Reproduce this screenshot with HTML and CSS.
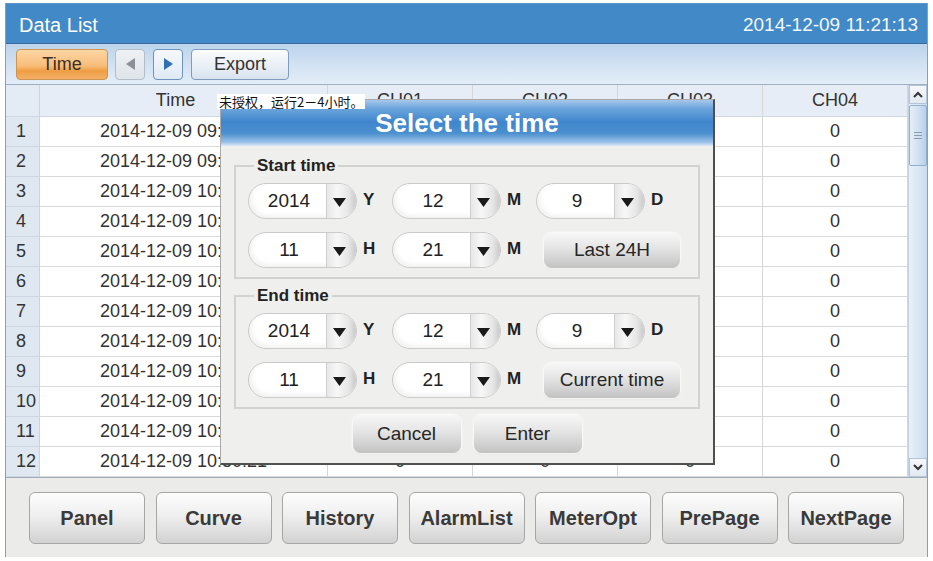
FILE: index.html
```html
<!DOCTYPE html>
<html lang="en">
<head>
<meta charset="utf-8">
<title>Data List</title>
<link rel="stylesheet" href="styles.css">
</head>
<body>
<div class="app">
  <header class="titlebar">
    <span class="title">Data List</span>
    <span class="clock">2014-12-09 11:21:13</span>
  </header>

  <div class="toolbar">
    <button class="tb-btn tb-time">Time</button>
    <button class="tb-btn tb-arrow tb-prev"><svg width="9" height="12" viewBox="0 0 9 12"><path d="M9 0V12L0 6Z"/></svg></button>
    <button class="tb-btn tb-arrow tb-next"><svg width="9" height="12" viewBox="0 0 9 12"><path d="M0 0V12L9 6Z"/></svg></button>
    <button class="tb-btn tb-export">Export</button>
  </div>

  <div class="grid-area">
    <div class="grid">
      <div class="row head">
        <div class="cell idx"></div><div class="cell time-head">Time</div><div class="cell">CH01</div><div class="cell">CH02</div><div class="cell">CH03</div><div class="cell">CH04</div>
      </div>
      <div class="row"><div class="cell idx">1</div><div class="cell">2014-12-09 09:55:21</div><div class="cell">0</div><div class="cell">0</div><div class="cell">0</div><div class="cell">0</div></div>
      <div class="row"><div class="cell idx">2</div><div class="cell">2014-12-09 09:59:21</div><div class="cell">0</div><div class="cell">0</div><div class="cell">0</div><div class="cell">0</div></div>
      <div class="row"><div class="cell idx">3</div><div class="cell">2014-12-09 10:05:21</div><div class="cell">0</div><div class="cell">0</div><div class="cell">0</div><div class="cell">0</div></div>
      <div class="row"><div class="cell idx">4</div><div class="cell">2014-12-09 10:10:21</div><div class="cell">0</div><div class="cell">0</div><div class="cell">0</div><div class="cell">0</div></div>
      <div class="row"><div class="cell idx">5</div><div class="cell">2014-12-09 10:15:21</div><div class="cell">0</div><div class="cell">0</div><div class="cell">0</div><div class="cell">0</div></div>
      <div class="row"><div class="cell idx">6</div><div class="cell">2014-12-09 10:20:21</div><div class="cell">0</div><div class="cell">0</div><div class="cell">0</div><div class="cell">0</div></div>
      <div class="row"><div class="cell idx">7</div><div class="cell">2014-12-09 10:25:21</div><div class="cell">0</div><div class="cell">0</div><div class="cell">0</div><div class="cell">0</div></div>
      <div class="row"><div class="cell idx">8</div><div class="cell">2014-12-09 10:30:21</div><div class="cell">0</div><div class="cell">0</div><div class="cell">0</div><div class="cell">0</div></div>
      <div class="row"><div class="cell idx">9</div><div class="cell">2014-12-09 10:35:21</div><div class="cell">0</div><div class="cell">0</div><div class="cell">0</div><div class="cell">0</div></div>
      <div class="row"><div class="cell idx">10</div><div class="cell">2014-12-09 10:40:21</div><div class="cell">0</div><div class="cell">0</div><div class="cell">0</div><div class="cell">0</div></div>
      <div class="row"><div class="cell idx">11</div><div class="cell">2014-12-09 10:45:21</div><div class="cell">0</div><div class="cell">0</div><div class="cell">0</div><div class="cell">0</div></div>
      <div class="row"><div class="cell idx">12</div><div class="cell">2014-12-09 10:50:21</div><div class="cell">0</div><div class="cell">0</div><div class="cell">0</div><div class="cell">0</div></div>
    </div>
    <div class="scrollbar">
      <div class="sb-btn"><svg width="10" height="7" viewBox="0 0 10 7"><path d="M1 6L5 2L9 6" fill="none" stroke="#333" stroke-width="2"/></svg></div>
      <div class="sb-track">
        <div class="sb-thumb"><svg width="8" height="7" viewBox="0 0 8 7"><path d="M0 .5H8M0 3.5H8M0 6.5H8" stroke="#8a9cb0" stroke-width="1"/></svg></div>
      </div>
      <div class="sb-btn sb-down"><svg width="10" height="7" viewBox="0 0 10 7"><path d="M1 1L5 5L9 1" fill="none" stroke="#333" stroke-width="2"/></svg></div>
    </div>
  </div>

  <nav class="bottombar">
    <button class="nav-btn">Panel</button>
    <button class="nav-btn">Curve</button>
    <button class="nav-btn">History</button>
    <button class="nav-btn">AlarmList</button>
    <button class="nav-btn">MeterOpt</button>
    <button class="nav-btn">PrePage</button>
    <button class="nav-btn">NextPage</button>
  </nav>

  <div class="dialog">
    <div class="dlg-head">Select the time</div>
    <div class="dlg-body">
      <fieldset class="group">
        <legend>Start time</legend>
        <div class="line">
          <div class="field"><div class="combo"><span class="combo-val">2014</span><span class="combo-arrow"><svg width="13" height="9" viewBox="0 0 13 9"><path d="M0 0H13L6.5 9Z"/></svg></span></div><span class="unit">Y</span></div>
          <div class="field"><div class="combo"><span class="combo-val">12</span><span class="combo-arrow"><svg width="13" height="9" viewBox="0 0 13 9"><path d="M0 0H13L6.5 9Z"/></svg></span></div><span class="unit">M</span></div>
          <div class="field"><div class="combo"><span class="combo-val">9</span><span class="combo-arrow"><svg width="13" height="9" viewBox="0 0 13 9"><path d="M0 0H13L6.5 9Z"/></svg></span></div><span class="unit">D</span></div>
        </div>
        <div class="line">
          <div class="field"><div class="combo"><span class="combo-val">11</span><span class="combo-arrow"><svg width="13" height="9" viewBox="0 0 13 9"><path d="M0 0H13L6.5 9Z"/></svg></span></div><span class="unit">H</span></div>
          <div class="field"><div class="combo"><span class="combo-val">21</span><span class="combo-arrow"><svg width="13" height="9" viewBox="0 0 13 9"><path d="M0 0H13L6.5 9Z"/></svg></span></div><span class="unit">M</span></div>
          <button class="soft-btn wide">Last 24H</button>
        </div>
      </fieldset>
      <fieldset class="group group-end">
        <legend>End time</legend>
        <div class="line">
          <div class="field"><div class="combo"><span class="combo-val">2014</span><span class="combo-arrow"><svg width="13" height="9" viewBox="0 0 13 9"><path d="M0 0H13L6.5 9Z"/></svg></span></div><span class="unit">Y</span></div>
          <div class="field"><div class="combo"><span class="combo-val">12</span><span class="combo-arrow"><svg width="13" height="9" viewBox="0 0 13 9"><path d="M0 0H13L6.5 9Z"/></svg></span></div><span class="unit">M</span></div>
          <div class="field"><div class="combo"><span class="combo-val">9</span><span class="combo-arrow"><svg width="13" height="9" viewBox="0 0 13 9"><path d="M0 0H13L6.5 9Z"/></svg></span></div><span class="unit">D</span></div>
        </div>
        <div class="line">
          <div class="field"><div class="combo"><span class="combo-val">11</span><span class="combo-arrow"><svg width="13" height="9" viewBox="0 0 13 9"><path d="M0 0H13L6.5 9Z"/></svg></span></div><span class="unit">H</span></div>
          <div class="field"><div class="combo"><span class="combo-val">21</span><span class="combo-arrow"><svg width="13" height="9" viewBox="0 0 13 9"><path d="M0 0H13L6.5 9Z"/></svg></span></div><span class="unit">M</span></div>
          <button class="soft-btn wide">Current time</button>
        </div>
      </fieldset>
      <div class="actions">
        <button class="soft-btn act">Cancel</button>
        <button class="soft-btn act">Enter</button>
      </div>
    </div>
  </div>

  <div class="watermark">未授权，运行2－4小时。</div>
</div>
</body>
</html>
```

FILE: styles.css
```css
* { box-sizing: border-box; }

html, body {
  margin: 0;
  padding: 0;
  background: #ffffff;
}

body {
  width: 933px;
  height: 561px;
  overflow: hidden;
  font-family: "Liberation Sans", Arial, sans-serif;
  color: #333;
}

button {
  font-family: inherit;
  padding: 0;
  margin: 0;
  cursor: default;
}

.app {
  position: relative;
  margin: 3px 0 0 5px;
  width: 923px;
  height: 554px;
  display: flex;
  flex-direction: column;
  border-left: 1px solid #8d9db2;
  border-right: 1px solid #8d9db2;
  border-bottom: 1px solid #9a9a9a;
}

/* title bar */
.titlebar {
  height: 41px;
  flex: none;
  display: flex;
  align-items: center;
  justify-content: space-between;
  padding: 3px 9px 0 13px;
  background: #4189c7;
  border-top: 1px solid #5a96cc;
  border-bottom: 1px solid #3569a0;
  color: #ffffff;
}
.title { font-size: 20px; }
.clock { font-size: 19px; color: #f4f8fc; }

/* toolbar */
.toolbar {
  height: 41px;
  flex: none;
  display: flex;
  align-items: center;
  gap: 7px;
  padding: 0 0 0 10px;
  background: linear-gradient(#bcd4ec, #d3e3f3 55%, #e3edf8);
  border-bottom: 1px solid #9eafc6;
}
.tb-btn {
  height: 31px;
  border-radius: 4px;
  font-size: 18px;
  color: #333;
  display: flex;
  align-items: center;
  justify-content: center;
}
.tb-time {
  width: 92px;
  border: 1px solid #cf9450;
  background: linear-gradient(#fcd6a4, #f8bd79 55%, #ef9d42 72%, #f3b067);
  color: #3a3026;
}
.tb-arrow { width: 30px; }
.tb-prev {
  border: 1px solid #b4bcc6;
  background: linear-gradient(#eef1f4, #dfe4ea);
  fill: #8c9096;
}
.tb-next {
  margin-left: 1px;
  border: 1px solid #6e92bb;
  background: linear-gradient(#f6f9fc, #dfe9f4);
  fill: #2f70b4;
}
.tb-export {
  width: 98px;
  margin-left: 1px;
  border: 1px solid #7f9cc0;
  background: linear-gradient(#fbfcfe, #e9eff6 55%, #d9e3ee);
}

/* data grid */
.grid-area {
  height: 392px;
  flex: none;
  display: flex;
}
.grid {
  width: 902px;
  flex: none;
  background: #ffffff;
}
.row {
  display: grid;
  grid-template-columns: 34px 288px 145px 145px 145px 145px;
  height: 30px;
}
.row.head {
  height: 32px;
  background: #e6edf6;
}
.cell {
  display: flex;
  align-items: center;
  justify-content: center;
  font-size: 18px;
  color: #333;
  border-right: 1px solid #d6d6d6;
  border-bottom: 1px solid #d9d9d9;
  white-space: nowrap;
  overflow: hidden;
}
.cell.time-head { padding-right: 16px; }
.cell.idx {
  justify-content: flex-start;
  padding-left: 10px;
  background: #dfe7f1;
  border-right: 1px solid #c9d4e1;
  border-bottom: 1px solid #ced8e4;
}
.row.head .cell.idx { background: #e3ebf5; }
.row.head .cell { border-bottom: 1px solid #d0d8e2; }

.scrollbar {
  flex: 1;
  display: flex;
  flex-direction: column;
  background: linear-gradient(to right, #e9f0f8, #d7e5f3 60%, #c7daee);
  border-left: 1px solid #c4d3e4;
}
.sb-btn {
  height: 19px;
  flex: none;
  display: flex;
  align-items: center;
  justify-content: center;
  background: linear-gradient(#f6f8fb, #e2e9f1);
  border: 1px solid #b5c4d6;
}
.sb-track {
  flex: 1;
}
.sb-thumb {
  height: 61px;
  margin-top: 1px;
  display: flex;
  align-items: center;
  justify-content: center;
  background: linear-gradient(to right, #e6eff8, #cddff1 60%, #b7cfe8);
  border: 1px solid #92afcf;
  border-radius: 2px;
}

/* bottom navigation */
.bottombar {
  height: 80px;
  flex: none;
  display: flex;
  gap: 10.5px;
  padding: 14px 0 0 23px;
  background: #ebebea;
  border-top: 1px solid #a2acb8;
}
.nav-btn {
  width: 116px;
  height: 52px;
  border: 1px solid #a6a6a6;
  border-radius: 6px;
  background: linear-gradient(#fdfdfd, #efefef 45%, #d2d2d2);
  font-size: 20px;
  font-weight: bold;
  color: #3a3a3a;
}

/* dialog overlay */
.dialog {
  position: absolute;
  left: 214px;
  top: 96px;
  width: 495px;
  background: #efefed;
  border-left: 1px solid #a9a9a9;
  border-top: 1px solid #a9a9a9;
  border-right: 2px solid #4f4f4f;
  border-bottom: 2px solid #4f4f4f;
}
.dlg-head {
  height: 46px;
  display: flex;
  align-items: center;
  justify-content: center;
  font-size: 26px;
  font-weight: bold;
  color: #ffffff;
  background: linear-gradient(#a7c8ea 0%, #6ca5dc 18%, #3f86cc 48%, #4a8fd0 72%, #9cc2e8 92%, #dceaf7 100%);
}
.dlg-body {
  padding: 11px 13px 10px 13px;
}
.group {
  margin: 0;
  padding: 8px 12px 9px 12px;
  border: 2px solid #d2d2d0;
  min-width: 0;
}
.group-end { margin-top: 8px; }
.group legend {
  margin-left: 6px;
  padding: 0 3px;
  font-size: 17px;
  line-height: 18px;
  font-weight: bold;
  color: #222;
}
.line {
  display: flex;
  align-items: center;
  height: 36px;
}
.line + .line { margin-top: 13px; }
.field {
  display: flex;
  align-items: center;
  width: 144px;
  flex: none;
}
.combo {
  width: 109px;
  height: 36px;
  display: flex;
  border: 1px solid #cacaca;
  border-radius: 18px;
  overflow: hidden;
  background: #ffffff;
  box-shadow: inset 3px -3px 4px rgba(0, 0, 0, 0.05);
}
.combo-val {
  width: 77px;
  flex: none;
  display: flex;
  align-items: center;
  justify-content: center;
  padding-left: 3px;
  font-size: 19px;
  color: #222;
}
.combo-arrow {
  flex: 1;
  display: flex;
  align-items: center;
  justify-content: center;
  padding: 3px 4px 0 0;
  border-left: 1px solid #cfcfcf;
  background: linear-gradient(to right, #e7e7e7, #f7f7f7 35%, #e6e6e6 75%, #c9c9c9);
  fill: #1a1a1a;
}
.unit {
  padding-left: 6px;
  margin-top: -3px;
  font-size: 17px;
  font-weight: bold;
  color: #222;
}
.soft-btn {
  border: none;
  border-radius: 8px;
  background: linear-gradient(#f7f7f7, #e6e6e6 40%, #cfcfcf 80%, #c2c2c2);
  box-shadow: 0 0 2px 1px rgba(255, 255, 255, 0.9), 0 1px 2px rgba(0, 0, 0, 0.12);
  font-size: 19px;
  color: #262626;
}
.wide {
  width: 136px;
  height: 35px;
  margin-left: 8px;
}
.actions {
  display: flex;
  justify-content: center;
  gap: 13px;
  margin-top: 6px;
}
.act {
  width: 108px;
  height: 38px;
}

.watermark {
  position: absolute;
  left: 211px;
  top: 91px;
  padding: 0 2px;
  background: #ffffff;
  font-family: "Noto Sans CJK SC", "Liberation Sans", sans-serif;
  font-size: 13px;
  line-height: 15px;
  color: #111;
}
```
